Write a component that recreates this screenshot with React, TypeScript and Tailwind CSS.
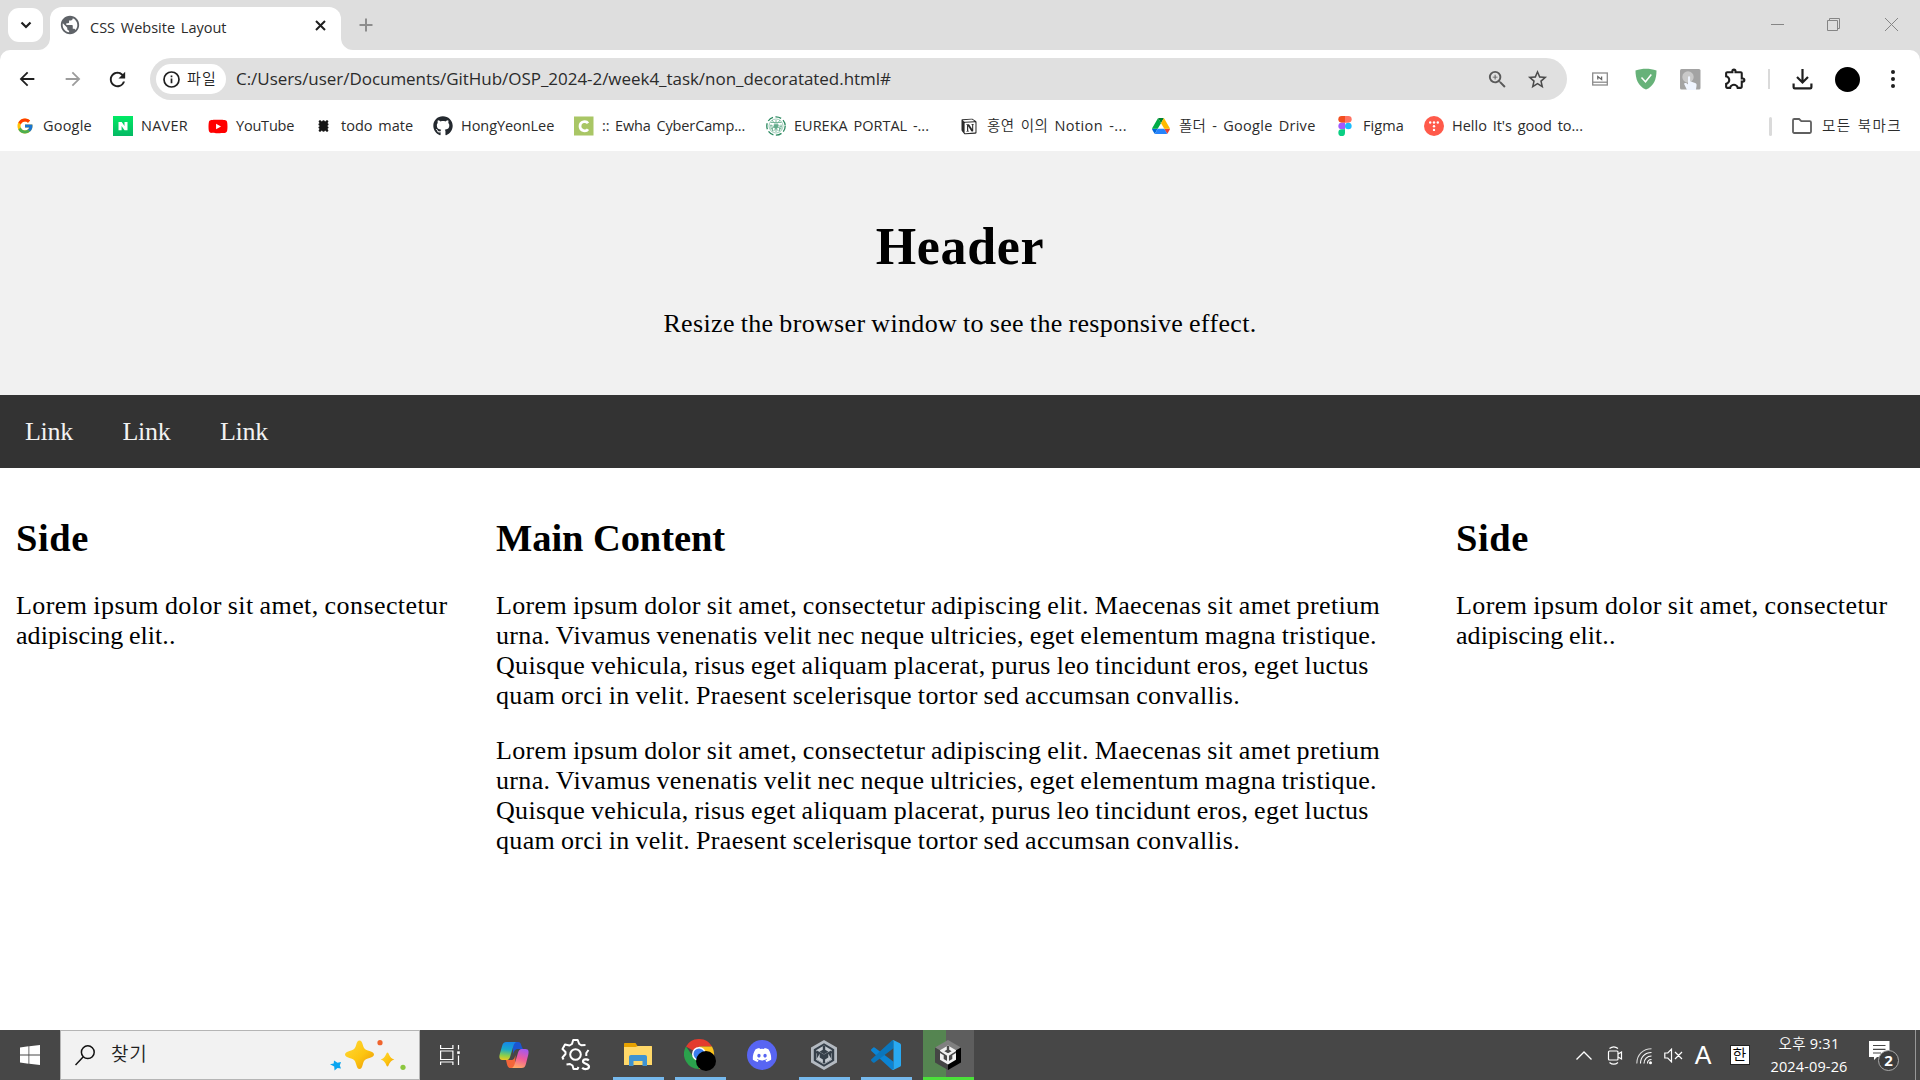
import type { ReactNode } from "react";
import { FcGoogle } from "react-icons/fc";
import { FaYoutube, FaGithub, FaDiscord } from "react-icons/fa";
import { RiNotionFill } from "react-icons/ri";
import {
  MdPublic,
  MdOutlineZoomIn,
  MdStarBorder,
  MdOutlineExtension,
  MdRefresh,
  MdArrowBack,
  MdArrowForward,
} from "react-icons/md";

function TodoIcon() {
  return (
    <svg width="11" height="12" viewBox="0 0 12 13" fill="#151515">
      <rect x="1.600" y="1.400" width="8.800" height="10.200" />
      {[2.2, 6, 9.8].map((x) => (
        <g key={x}>
          <circle cx={x} cy="1.600" r="1.400" />
          <circle cx={x} cy="11.400" r="1.400" />
        </g>
      ))}
      {[4.8, 8.2].map((y) => (
        <g key={y}>
          <circle cx="1.700" cy={y} r="1.200" />
          <circle cx="10.300" cy={y} r="1.200" />
        </g>
      ))}
    </svg>
  );
}

function NaverIcon() {
  return (
    <svg width="20" height="20" viewBox="0 0 20 20">
      <defs>
        <linearGradient id="naver" x1="0" y1="0" x2="0" y2="1">
          <stop offset="0" stopColor="#00ea64" />
          <stop offset="1" stopColor="#05b964" />
        </linearGradient>
      </defs>
      <rect width="20" height="20" fill="url(#naver)" />
      <path d="M5.500 6h3.200l2.800 4V6h3v8.200h-3l-2.900-4.100v4.100H5.500z" fill="#fff" />
    </svg>
  );
}

function CampusIcon() {
  return (
    <svg width="20" height="20" viewBox="0 0 20 20">
      <rect width="19.500" height="19" y=".5" fill="#a9c665" />
      <path d="M14 7.300C12.500 4.900 6 4.600 6 10.300c0 5.500 6.500 5.200 8 2.900" fill="none" stroke="#fff" strokeWidth="2.700" />
    </svg>
  );
}

function SealIcon() {
  return (
    <svg width="20" height="20" viewBox="0 0 20 20" fill="none" stroke="#6fb193">
      <circle cx="10" cy="10" r="9.200" strokeWidth="1.300" strokeDasharray="6 2.500" stroke="#2b8a60" />
      <circle cx="10" cy="10" r="7" strokeWidth=".8" stroke="#8ac2a8" />
      <path d="M4.500 6.500h11M6 4l2.500 3.500M14 4l-2.500 3.500M4 10c3-2 3 3 6 0s3 2 6 0M10 4v12M5 13l3-2M15 13l-3-2M7 15.500l3-3 3 3M5 8.500v5M15 8.500v5M6.500 11.500v3.500M13.500 11.500v3.500" strokeWidth=".9" />
      <path d="M8 8.500h4v3l-2 1.500-2-1.500z" fill="#63ab8b" strokeWidth=".6" />
    </svg>
  );
}

function DriveIcon() {
  return (
    <svg width="18" height="16" viewBox="0 0 87.300 78">
      <path d="M6.600 66.850l3.850 6.650c.8 1.400 1.950 2.500 3.300 3.300L27.500 53H0c0 1.550.4 3.100 1.200 4.500z" fill="#0066da" />
      <path d="M43.650 25L29.900 1.200c-1.350.8-2.500 1.900-3.300 3.300L1.200 48.500C.4 49.900 0 51.450 0 53h27.500z" fill="#00ac47" />
      <path d="M73.550 76.800c1.350-.8 2.500-1.900 3.300-3.300l1.600-2.750L86.100 57.500c.8-1.400 1.200-2.950 1.200-4.500H59.800l5.850 11.500z" fill="#ea4335" />
      <path d="M43.650 25L57.400 1.200C56.050.4 54.500 0 52.900 0H34.400c-1.600 0-3.150.45-4.500 1.200z" fill="#00832d" />
      <path d="M59.800 53H27.500L13.750 76.800c1.350.8 2.900 1.200 4.500 1.200h50.800c1.600 0 3.150-.45 4.500-1.200z" fill="#2684fc" />
      <path d="M73.400 26.500L60.700 4.500c-.8-1.400-1.950-2.500-3.300-3.300L43.650 25l16.150 28h27.450c0-1.550-.4-3.100-1.200-4.500z" fill="#ffba00" />
    </svg>
  );
}

function FigmaIcon() {
  return (
    <svg width="14" height="20" viewBox="0 0 13 19.500">
      <path d="M3.250 0H6.500v6.500H3.250a3.250 3.250 0 010-6.500z" fill="#f24e1e" />
      <path d="M6.500 0h3.250a3.250 3.250 0 010 6.500H6.500z" fill="#ff7262" />
      <path d="M3.250 6.500H6.500V13H3.250a3.250 3.250 0 010-6.500z" fill="#a259ff" />
      <circle cx="9.750" cy="9.750" r="3.250" fill="#1abcfe" />
      <path d="M3.250 13H6.500v3.250A3.250 3.250 0 113.250 13z" fill="#0acf83" />
    </svg>
  );
}

function TistoryIcon() {
  return (
    <svg width="20" height="20" viewBox="0 0 20 20">
      <circle cx="10" cy="10" r="10" fill="#ff5a4a" />
      <g fill="#fff">
        <circle cx="6.200" cy="6.500" r="1.200" />
        <circle cx="10" cy="6.500" r="1.200" />
        <circle cx="13.800" cy="6.500" r="1.200" />
        <circle cx="10" cy="10.200" r="1.200" />
        <circle cx="10" cy="13.900" r="1.200" />
      </g>
    </svg>
  );
}

const bookmarks: { icon: ReactNode; item: string; text: string; label: string }[] = [
  { icon: <FcGoogle size={18} />, item: "w-[98px]", text: "tracking-[0.2px]", label: "Google" },
  { icon: <NaverIcon />, item: "w-[95px]", text: "tracking-[0.25px]", label: "NAVER" },
  { icon: <FaYoutube size={21} color="#f00" />, item: "w-[105px]", text: "tracking-[-0.2px]", label: "YouTube" },
  { icon: <TodoIcon />, item: "w-[120px]", text: "", label: "todo mate" },
  { icon: <FaGithub size={20} color="#24292f" />, item: "w-[141px]", text: "tracking-[-0.06px]", label: "HongYeonLee" },
  { icon: <CampusIcon />, item: "w-[192px]", text: "tracking-[-0.12px]", label: ":: Ewha CyberCamp..." },
  { icon: <SealIcon />, item: "w-[193px]", text: "", label: "EUREKA PORTAL -..." },
  { icon: <RiNotionFill size={21} />, item: "w-[192px]", text: "tracking-[0.42px]", label: "홍연 이의 Notion -..." },
  { icon: <DriveIcon />, item: "w-[184px]", text: "tracking-[0.28px]", label: "폴더 - Google Drive" },
  { icon: <FigmaIcon />, item: "w-[89px]", text: "tracking-[0.1px]", label: "Figma" },
  { icon: <TistoryIcon />, item: "w-[200px]", text: "", label: "Hello It's good to..." },
];

function TabStrip() {
  return (
    <div className="flex h-[50px] bg-[#dedede]">
      <div className="ml-2 mt-2 flex h-[34px] w-[35px] shrink-0 items-center justify-center rounded-[11px] bg-white">
        <svg width="12" height="8" viewBox="0 0 12 8" fill="none" stroke="#1f1f1f" strokeWidth="2.200">
          <path d="M1.500 1.500L6 6l4.500-4.500" />
        </svg>
      </div>
      <svg className="ml-[-5px] mt-[38px] shrink-0" width="12" height="12" viewBox="0 0 12 12">
        <path d="M12 0v12H0A12 12 0 0012 0z" fill="#fff" />
      </svg>
      <div className="mt-[7px] flex h-[43px] w-[291px] shrink-0 items-start rounded-t-[12px] bg-white">
        <MdPublic className="ml-[9px] mt-[7px] shrink-0" size={22} color="#5f6368" />
        <span className="ml-[9px] mt-[11px] text-[14.5px] leading-[20px] whitespace-nowrap text-[#2b2b2b] [word-spacing:2px]">
          CSS Website Layout
        </span>
        <svg className="mr-[15px] mt-[13px] ml-auto" width="11" height="11" viewBox="0 0 11 11" stroke="#1f1f1f" strokeWidth="2">
          <path d="M1 1l9 9M10 1l-9 9" />
        </svg>
      </div>
      <svg className="mt-[38px] shrink-0" width="12" height="12" viewBox="0 0 12 12">
        <path d="M0 0v12h12A12 12 0 010 0z" fill="#fff" />
      </svg>
      <svg className="ml-[6px] mt-[18px]" width="14" height="14" viewBox="0 0 14 14" stroke="#8d8d8d" strokeWidth="2">
        <path d="M7 .5v13M.5 7h13" />
      </svg>
      <div className="ml-auto mr-[21px] flex gap-[42px] pt-[17px]">
        <svg width="15" height="15" viewBox="0 0 15 15" stroke="#858585" fill="none">
          <path d="M1 7.500h13" />
        </svg>
        <svg width="15" height="15" viewBox="0 0 15 15" stroke="#858585" fill="none">
          <path d="M.5 3.500h10v10h-10zM2.500 3.500v-2h10v10h-2" />
        </svg>
        <svg width="15" height="15" viewBox="0 0 15 15" stroke="#858585" fill="none">
          <path d="M1 1l13 13M14 1L1 14" />
        </svg>
      </div>
    </div>
  );
}

function Slot({ w, children }: { w: string; children: ReactNode }) {
  return <div className={"flex shrink-0 items-center justify-center " + w}>{children}</div>;
}

function Toolbar() {
  return (
    <div className="bg-[#dedede]">
      <div className="flex h-[58px] items-center rounded-t-[10px] bg-white">
        <Slot w="ml-[4px] w-[46px]"><MdArrowBack size={22} color="#1f1f1f" /></Slot>
        <Slot w="w-[45px]"><MdArrowForward size={22} color="#9c9c9c" /></Slot>
        <Slot w="w-[45px]"><MdRefresh size={23} color="#1f1f1f" /></Slot>
        <div className="ml-[10px] flex h-[42px] w-[1417px] shrink-0 items-center rounded-full bg-[#e0e0e0]">
          <div className="ml-[6px] flex h-[30px] w-[70px] shrink-0 items-center rounded-full bg-white">
            <svg className="ml-[7px]" width="17" height="17" viewBox="0 0 17 17" fill="none" stroke="#1f1f1f" strokeWidth="1.700">
              <circle cx="8.500" cy="8.500" r="7.500" />
              <path d="M8.500 7.500v4.700M8.500 4.500v1.800" />
            </svg>
            <span className="mb-[2px] ml-[7px] text-[15px] leading-[22px] tracking-[1.2px] text-[#1f1f1f]">파일</span>
          </div>
          <span className="ml-[10px] text-[17px] leading-[24px] tracking-[-0.04px] whitespace-nowrap text-[#2b2b2b]">
            C:/Users/user/Documents/GitHub/OSP_2024-2/week4_task/non_decoratated.html#
          </span>
          <div className="mr-[9px] ml-auto flex">
            <Slot w="w-[40px]"><MdOutlineZoomIn size={23} color="#5a5a5a" /></Slot>
            <Slot w="w-[41px]"><MdStarBorder size={23} color="#4b4b4b" /></Slot>
          </div>
        </div>
        <Slot w="ml-[10px] w-[46px]">
          <svg width="16" height="14" viewBox="0 0 16 14" fill="none" stroke="#8b8b8b" strokeWidth="1.300">
            <rect x=".7" y="1" width="14.600" height="12" />
            <path d="M1 10.200h14" />
            <path d="M5.800 7.500v-3l3.800 3v-3" stroke="#666" strokeWidth="1.300" />
          </svg>
        </Slot>
        <Slot w="w-[45px]">
          <svg width="22" height="22" viewBox="0 0 22 22">
            <path d="M11 .8c3.500 0 7 .6 10.500 1.600C21.500 11 19 18 11 21.500 3 18 .5 11 .5 2.400 4 1.400 7.500.8 11 .8z" fill="#67b279" />
            <path d="M6.500 9.500l4 4.300L16.300 6.500" fill="none" stroke="#fff" strokeWidth="1.500" />
          </svg>
        </Slot>
        <Slot w="w-[45px]">
          <svg width="21" height="21" viewBox="0 0 21 21">
            <rect width="20.500" height="20.500" rx="1.500" fill="#a3a3a3" />
            <circle cx="8" cy="8" r="5.700" fill="#c9c9c9" />
            <path d="M8 8.300c0-1.500 2.100-1.500 2.100 0v4l5 1.700c1.600.5 1.600 1.700 1.400 2.900l-.6 4.100H7l-3-6.300c.7-1.100 2.500-.7 4 .8z" fill="#f0f5ff" />
          </svg>
        </Slot>
        <Slot w="w-[45px]">
          <MdOutlineExtension className="mb-[2px]" size={25} color="#1f1f1f" />
        </Slot>
        <Slot w="w-[22px]"><div className="h-5 w-[2px] bg-[#dadada]" /></Slot>
        <Slot w="w-[45px]">
          <svg width="21" height="21" viewBox="0 0 21 21" fill="none" stroke="#1f1f1f" strokeWidth="2.200">
            <path d="M10.500 0v13M5 8l5.500 5.500L16 8M1.600 14.500v3.700c0 .8.500 1.200 1.200 1.200h15.400c.7 0 1.200-.4 1.200-1.200v-3.700" />
          </svg>
        </Slot>
        <Slot w="w-[45px]"><div className="h-[25px] w-[25px] rounded-full bg-black" /></Slot>
        <Slot w="w-[45px]">
          <svg width="4" height="20" viewBox="0 0 4 20" fill="#1f1f1f">
            <circle cx="2" cy="3" r="2" />
            <circle cx="2" cy="10" r="2" />
            <circle cx="2" cy="17" r="2" />
          </svg>
        </Slot>
      </div>
    </div>
  );
}

function BookmarkBar() {
  return (
    <div className="flex h-[43px] items-center pb-[7px] pl-[15px] text-[14.5px] text-[#2b2b2b]">
      {bookmarks.map((b) => (
        <div key={b.label} className={"flex shrink-0 items-center gap-2 " + b.item}>
          <div className="flex h-5 w-5 shrink-0 items-center justify-center">{b.icon}</div>
          <span className={"leading-[20px] whitespace-nowrap [word-spacing:2px] " + b.text}>{b.label}</span>
        </div>
      ))}
      <div className="ml-auto h-[19px] w-[3px] rounded-full bg-[#dadada]" />
      <svg className="ml-[20px]" width="20" height="16" viewBox="0 0 20 16" fill="none" stroke="#5f5f5f" strokeWidth="1.800">
        <path d="M1 2.200C1 1.400 1.500 1 2.200 1h4.900l2.200 2.200h8.500c.7 0 1.200.5 1.200 1.200v9.400c0 .7-.5 1.200-1.200 1.200H2.200C1.500 15 1 14.500 1 13.800z" />
      </svg>
      <span className="mr-[17px] ml-[10px] w-[81px] leading-[20px] tracking-[1.4px] whitespace-nowrap [word-spacing:1px]">모든 북마크</span>
    </div>
  );
}

function Lorem() {
  return (
    <>
      <span className="tracking-[0.357px]">Lorem ipsum dolor sit amet, consectetur adipiscing elit. Maecenas sit amet pretium</span>
      <br />
      <span className="tracking-[0.351px]">urna. Vivamus venenatis velit nec neque ultricies, eget elementum magna tristique.</span>
      <br />
      <span className="tracking-[0.344px]">Quisque vehicula, risus eget aliquam placerat, purus leo tincidunt eros, eget luctus</span>
      <br />
      <span className="tracking-[0.345px]">quam orci in velit. Praesent scelerisque tortor sed accumsan convallis.</span>
    </>
  );
}

function SideColumn() {
  return (
    <div className="w-[480px] shrink-0 px-4 pt-[48px] whitespace-nowrap">
      <h2 className="text-[38.5px] leading-[44px] font-bold tracking-[0.6px]">Side</h2>
      <p className="mt-[31px] [word-spacing:-1px]">
        <span className="tracking-[0.42px]">Lorem ipsum dolor sit amet, consectetur</span>
        <br />
        <span className="tracking-[0.05px]">adipiscing elit..</span>
      </p>
    </div>
  );
}

function Page() {
  return (
    <div className="flex h-[879px] flex-col bg-white font-['Liberation_Serif',serif] text-[26px] leading-[30px] text-black">
      <header className="h-[244px] shrink-0 bg-[#f1f1f1] pt-[66px] text-center">
        <h1 className="text-[52px] leading-[60px] font-bold tracking-[0.65px]">Header</h1>
        <p className="mt-[32px] tracking-[0.345px] [word-spacing:-1px]">Resize the browser window to see the responsive effect.</p>
      </header>
      <nav className="flex h-[73px] shrink-0 items-center bg-[#333] pt-px tracking-[-0.27px] text-[#f2f2f2]">
        <a className="w-[97.500px] pl-[25px]">Link</a>
        <a className="w-[97.500px] pl-[25px]">Link</a>
        <a className="w-[97.500px] pl-[25px]">Link</a>
      </nav>
      <main className="flex">
        <SideColumn />
        <div className="w-[960px] shrink-0 px-4 pt-[48px] whitespace-nowrap">
          <h2 className="text-[38.5px] leading-[44px] font-bold tracking-[-0.08px]">Main Content</h2>
          <p className="mt-[31px] [word-spacing:-1px]"><Lorem /></p>
          <p className="mt-[25px] [word-spacing:-1px]"><Lorem /></p>
        </div>
        <SideColumn />
      </main>
    </div>
  );
}

function CopilotIcon() {
  return (
    <svg width="30" height="28" viewBox="0 0 30 28">
      <defs>
        <linearGradient id="cpA" x1=".3" y1="0" x2=".2" y2="1">
          <stop offset="0" stopColor="#1687e8" />
          <stop offset=".4" stopColor="#19a9c9" />
          <stop offset=".75" stopColor="#8ccf4b" />
          <stop offset="1" stopColor="#f0c820" />
        </linearGradient>
        <linearGradient id="cpB" x1=".7" y1="0" x2=".4" y2="1">
          <stop offset="0" stopColor="#a458f0" />
          <stop offset=".5" stopColor="#ef5b9b" />
          <stop offset="1" stopColor="#ffa765" />
        </linearGradient>
      </defs>
      <path d="M14 1h5c2.500 0 3 2 3.700 4.500L24 8h-5c-3 0-4 2-5 5z" fill="#1b55d0" />
      <path d="M16 27h-4.500c-2.500 0-3-2-3.700-4.500L7 19h5c3 0 3.500-2 4.500-5z" fill="#f2663a" />
      <path d="M7.500 1H18c-2 0-3 1.800-3.700 4.200l-3 10C10.500 18 9.500 19 7 19H3.500C0 19 0 16 .8 13l2.300-8C4 2 5 1 7.500 1z" fill="url(#cpA)" />
      <path d="M22.500 27H12c2 0 3-1.800 3.700-4.200l3-10C19.500 10 20.500 8 23 8h3.500C30 8 30 11 29.200 14l-2.300 9c-.9 3-1.900 4-4.400 4z" fill="url(#cpB)" />
    </svg>
  );
}

function GearIcon() {
  return (
    <svg width="30" height="32" viewBox="0 0 30 32" fill="none" stroke="#fff" strokeWidth="2">
      <path d="M5.500 25.500L9 25l2.500 1.500L12.500 30h4l1-2M2.500 20.500l-1-2 3-3.500v-2L1.500 10l2.500-4.500 4.500 1 2.500-1.500L12.200 1h4.500l1.500 4 2 1.200L24.500 6M27.500 11l-2.200 3v3" strokeLinejoin="round" />
      <circle cx="14.500" cy="15.500" r="5.300" />
      <path d="M27.800 21.500c-1.500-1.700-5.800-1.500-5.800 1s6 2 6 5-5 3.300-6.800 1.300" strokeWidth="2.200" />
    </svg>
  );
}

function FolderIcon() {
  return (
    <svg width="28" height="24" viewBox="0 0 28 24">
      <path d="M0 1C0 .4.400 0 1 0h10.500l2 3H27c.6 0 1 .4 1 1v7H0z" fill="#e6a100" />
      <path d="M0 4h11.500l2.500-1h13c.6 0 1 .4 1 1v18H0z" fill="#ffd869" />
      <path d="M5 23v-9c0-1.200.8-2 2-2h14c1.200 0 2 .8 2 2v9h-4.500v-5h-9v5z" fill="#3f93d2" />
    </svg>
  );
}

function ChromeIcon() {
  return (
    <svg width="32" height="32" viewBox="0 0 32 32">
      <path d="M15 15L2 7.500A15 15 0 0128 7.500H15z" fill="#e33b2e" />
      <path d="M15 15L15 7.500H28A15 15 0 0115 30z" fill="#fcc31e" />
      <path d="M15 15v15A15 15 0 012 7.500l7 10z" fill="#2ba24c" />
      <circle cx="15" cy="15" r="7" fill="#fff" />
      <circle cx="15" cy="15" r="5.500" fill="#3b7ded" />
      <circle cx="22" cy="22" r="10" fill="#000" />
    </svg>
  );
}

/* Cube mark shared by both Unity icons, drawn in a 26x30 box. */
function CubeMark({ light, dark }: { light: string; dark: string }) {
  return (
    <g>
      <path d="M13 5.500l8 4.700v9.600l-8 4.700-8-4.700v-9.600z" fill={light} />
      <path d="M13 14.300L8.500 11.700l3.300-1.900V6h2.400v3.800l3.300 1.900z" fill={dark} />
      <path d="M12.100 15.700v5.400l-3.400-2v-3.900L5 13v-1.900z" fill={dark} />
      <path d="M13.900 15.700v5.400l3.400-2v-3.900L21 13v-1.900z" fill={dark} />
    </g>
  );
}

function UnityHubIcon() {
  return (
    <svg width="26" height="30" viewBox="0 0 26 30">
      <path d="M13 0l13 7.500v15L13 30 0 22.500v-15z" fill="#b4bac1" />
      <path d="M13 3.300l10.200 5.900v11.600L13 26.700 2.800 20.800V9.200z" fill="#36404a" />
      <CubeMark light="#c3c9cf" dark="#36404a" />
      <path d="M13 14.500l7.500-4.300v9.100L13 23.700l-7.500-4.400v-9.100z" fill="#36404a" />
      <path d="M5.500 19.300l3.200-5.500v3.700l3.200 1.900v3.600zM20.500 19.300l-3.200-5.500v3.700l-3.200 1.900v3.600z" fill="#c3c9cf" />
    </svg>
  );
}

function UnityIcon() {
  return (
    <svg width="26" height="30" viewBox="0 0 26 30">
      <path d="M13 0l13 7.500L13 15 0 7.500z" fill="#808080" />
      <path d="M0 7.500L13 15v15L0 22.500z" fill="#454545" />
      <path d="M26 7.500L13 15v15l13-7.500z" fill="#000" />
      <CubeMark light="#f2f2f2" dark="#4b4b4b" />
      <path d="M13 14.300v9M13 14.300L6.500 10.500M13 14.300l6.500-3.800" stroke="#f2f2f2" strokeWidth="1.600" />
    </svg>
  );
}

function VsCodeIcon() {
  return (
    <svg width="30" height="30" viewBox="0 0 24 24">
      <path d="M18 17.450L2.900 6a1 1 0 00-1.300.1L.3 7.300a1 1 0 000 1.400L16.500 23.500 18 24z" fill="#0b84d4" />
      <path d="M18 6.550L2.900 18a1 1 0 01-1.300-.1L.3 16.700a1 1 0 010-1.400L16.500.5 18 0z" fill="#0a76bd" />
      <path d="M16.500.5a1.500 1.500 0 011.700-.3l4.900 2.400A1.500 1.500 0 0124 3.900v16.200a1.500 1.500 0 01-.9 1.300l-4.900 2.400a1.500 1.500 0 01-1.700-.3c.6.500 1.500.1 1.500-.7V1.200c0-.8-.9-1.200-1.500-.7z" fill="#29a9f2" />
    </svg>
  );
}

function TaskItem({ running = false, children }: { running?: boolean; children: ReactNode }) {
  return (
    <div className="flex h-[50px] w-[51px] shrink-0 flex-col">
      <div className={"flex flex-1 items-center justify-center pr-px " + (running ? "pt-[3px]" : "")}>{children}</div>
      {running && <div className="h-[3px] bg-[#76b9ed]" />}
    </div>
  );
}

function Taskbar() {
  return (
    <div className="flex h-[50px] shrink-0 bg-[#474747] text-white">
      <Slot w="w-[60px]">
        <svg width="20" height="20" viewBox="0 0 20 20" fill="#fff">
          <path d="M0 2.600L8.500 1.300V9.500H0zM9.300 1.200L20 0v9.500H9.300zM0 10.400h8.500v8.300L0 17.400zM9.300 10.400H20V20L9.300 18.800z" />
        </svg>
      </Slot>
      <div className="flex w-[360px] shrink-0 items-center border border-[#b5b5b5] bg-[#f2f2f2]">
        <svg className="ml-[14px]" width="20" height="21" viewBox="0 0 20 21" fill="none" stroke="#111" strokeWidth="1.500">
          <circle cx="12.800" cy="7.200" r="6.400" />
          <path d="M8.300 11.700L.5 20" />
        </svg>
        <span className="mb-[2px] ml-[16px] text-[19px] leading-[26px] tracking-[0.8px] text-[#1f1f1f]">찾기</span>
        <svg className="mr-[13px] ml-auto" width="76" height="32" viewBox="0 0 76 32">
          <defs>
            <linearGradient id="spark" x1="0" y1="0" x2="1" y2="1">
              <stop offset="0" stopColor="#ffd93a" />
              <stop offset=".55" stopColor="#fdc510" />
              <stop offset="1" stopColor="#e8920c" />
            </linearGradient>
          </defs>
          <path d="M29.500 1.500c1.700 0 2.400 1.200 3.300 4.300 1.300 4.300 1.800 4.600 6.700 6.200 3 1 4.500 1.800 4.500 3.500s-1.500 2.500-4.500 3.500c-4.900 1.600-5.400 2-6.700 6.400-.9 3.100-1.600 4.600-3.300 4.600s-2.400-1.500-3.300-4.600c-1.300-4.400-1.800-4.800-6.700-6.400-3-1-4.500-1.800-4.500-3.500s1.500-2.500 4.500-3.500c4.900-1.600 5.400-1.900 6.700-6.200.9-3.100 1.600-4.300 3.300-4.300z" fill="url(#spark)" />
          <path d="M57.500 13.500c1.500 0 1.300 5.200 6.800 7-5.500 1.600-5.300 7-6.800 7s-1.300-5.400-6.800-7c5.500-1.800 5.300-7 6.800-7z" fill="url(#spark)" />
          <path d="M4 21.500l3.500 2.200 3.500-.7-1.200 3.500 1.200 3-3.500-.6-3 2.600-.3-4L0 25.300l3.700-.8z" fill="#0aa5f0" />
          <circle cx="50" cy="3.700" r="2.600" fill="#f0642d" />
          <circle cx="73" cy="28.300" r="2.600" fill="#8cc73f" />
        </svg>
      </div>
      <Slot w="w-[60px]">
        <svg width="20" height="20" viewBox="0 0 20 20" fill="none" stroke="#fff" strokeWidth="1.200">
          <path d="M.6 0v3.500h12.300V0M.6 6h12.300v8.500H.6zM.6 20v-3h12.300v3M18.500 0v4.500M18.500 10.500V20" />
          <rect x="17.200" y="6.300" width="2.600" height="2.600" fill="#fff" stroke="none" />
        </svg>
      </Slot>
      <div className="ml-[9px] flex shrink-0 gap-[11px]">
        <TaskItem><CopilotIcon /></TaskItem>
        <TaskItem><GearIcon /></TaskItem>
        <TaskItem running><FolderIcon /></TaskItem>
        <TaskItem running><ChromeIcon /></TaskItem>
        <TaskItem>
          <div className="flex h-[30px] w-[30px] items-center justify-center rounded-full bg-[#5865f2]"><FaDiscord size={20} /></div>
        </TaskItem>
        <TaskItem running><UnityHubIcon /></TaskItem>
        <TaskItem running><VsCodeIcon /></TaskItem>
        <div className="flex h-[50px] w-[51px] flex-col bg-gradient-to-r from-[#558551] from-[45%] to-[#5e5e5e] to-[45%]">
          <div className="flex flex-1 items-center justify-center pt-[3px] pr-px"><UnityIcon /></div>
          <div className="h-[3px] bg-[#4be03a]" />
        </div>
      </div>
      <div className="ml-auto flex shrink-0 items-center">
        <Slot w="w-[32px]">
          <svg width="16" height="9" viewBox="0 0 16 9" fill="none" stroke="#fff" strokeWidth="1.300"><path d="M.5 8.500L8 1l7.500 7.500" /></svg>
        </Slot>
        <Slot w="w-[30px]">
          <svg width="16" height="19" viewBox="0 0 16 19" fill="none" stroke="#fff" strokeWidth="1.200">
            <rect x="1.500" y="5" width="9.500" height="9" rx="1" />
            <path d="M11 8l3.500-2v7L11 11M2.500 2.500C5 .5 8.500.5 11 2.500M2.500 16.500c2.500 2 6 2 8.500 0" />
          </svg>
        </Slot>
        <Slot w="w-[29px]">
          <svg className="mt-[2px]" width="17" height="17" viewBox="0 0 17 17" fill="none" stroke="#fff" strokeWidth="1.100">
            <path d="M.8 15.500C.8 7 7 .8 15.500.8" opacity=".8" />
            <path d="M4.500 15.500c0-6.500 4.500-11 11-11M8 15.500c0-4.300 3.200-7.500 7.500-7.500M11.500 15.500c0-2.300 1.700-4 4-4" />
            <circle cx="14.500" cy="14.700" r="1.500" fill="#fff" stroke="none" />
          </svg>
        </Slot>
        <Slot w="w-[29px]">
          <svg width="19" height="15" viewBox="0 0 19 15" fill="none" stroke="#fff" strokeWidth="1.200">
            <path d="M.8 5h3L7.500 1.200v12.600L3.800 10h-3zM11 4l7 7M18 4l-7 7" />
          </svg>
        </Slot>
        <span className="w-[30px] text-center font-['Liberation_Sans',sans-serif] text-[25px] leading-[30px]">A</span>
        <Slot w="w-[43px]">
          <span className="h-5 w-5 border border-[#222] bg-white text-center text-[15px] leading-[17px] text-black">한</span>
        </Slot>
        <div className="ml-[8px] w-[80px] text-center text-[14.500px] leading-[23px] whitespace-nowrap">
          <div className="tracking-[0.25px]">오후 9:31</div>
          <div className="tracking-[0.13px]">2024-09-26</div>
        </div>
        <div className="relative mr-[16px] ml-[20px] h-[32px] w-[30px]">
          <svg className="mt-[2px]" width="21" height="19" viewBox="0 0 21 19">
            <path d="M0 0h20.500v16H8l-3 3v-3H0z" fill="#fff" />
            <path d="M4 4.500h12.500M4 8.300h12.500M4 12h8" stroke="#474747" strokeWidth="1.200" />
          </svg>
          <span className="absolute top-[11px] left-[9px] flex h-[21px] w-[21px] items-center justify-center rounded-full border border-[#aaa] bg-[#3c3c3c] text-[15px] leading-none font-bold">2</span>
        </div>
        <div className="mr-[4px] h-[50px] w-px bg-[#989898]" />
      </div>
    </div>
  );
}

export default function App() {
  return (
    <div className="flex h-[1080px] w-[1920px] flex-col overflow-hidden bg-white font-['Open_Sans','Noto_Sans_CJK_KR_DemiLight','Noto_Sans_CJK_KR',sans-serif] font-normal">
      <TabStrip />
      <Toolbar />
      <BookmarkBar />
      <Page />
      <Taskbar />
    </div>
  );
}
